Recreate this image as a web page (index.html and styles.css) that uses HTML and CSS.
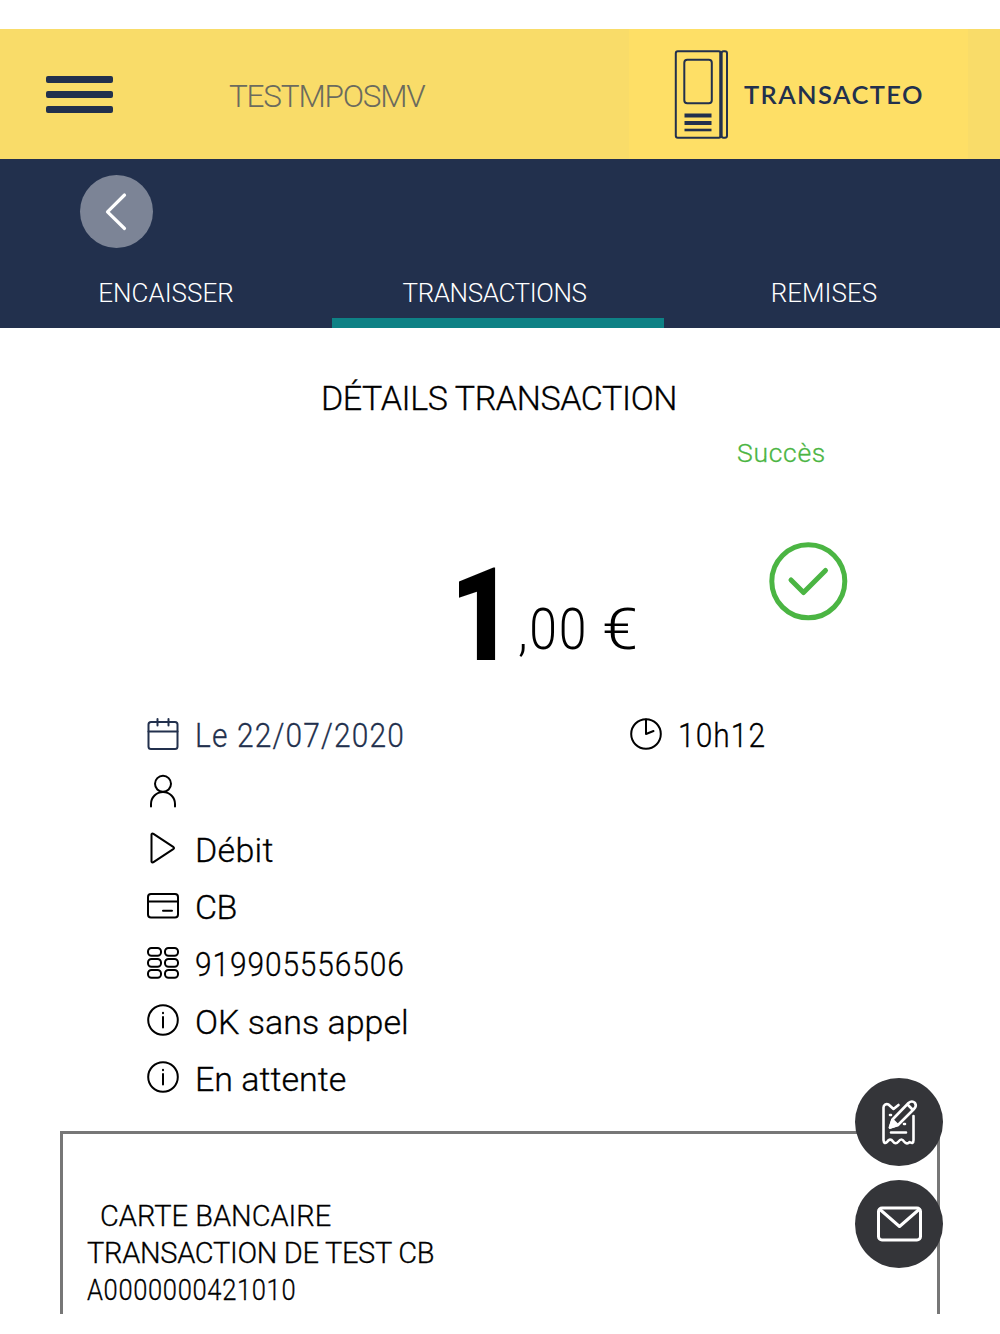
FILE: index.html
```html
<!DOCTYPE html>
<html lang="fr">
<head>
<meta charset="UTF-8">
<meta name="viewport" content="width=device-width, initial-scale=1.0">
<title>Transacteo - Détails transaction</title>
<link rel="stylesheet" href="styles.css">
</head>
<body>
  <header class="header">
    <button class="menu-toggle" aria-label="Menu">
      <span class="bar"></span>
      <span class="bar"></span>
      <span class="bar"></span>
    </button>
    <div class="merchant">TESTMPOSMV</div>
    <div class="logo">
      <svg class="logo-icon" width="54" height="90" viewBox="0 0 54 90" fill="none" stroke="#22304d" stroke-width="2">
        <rect x="1.8" y="2.3" width="45" height="86.5" rx="2"/>
        <rect x="47.5" y="2.3" width="5.5" height="86.5" rx="2"/>
        <path d="M46.8 3v85" stroke-width="3"/>
        <rect x="10.300" y="10.8" width="27.500" height="43.5" rx="3"/>
        <path d="M10.500 66.500h27M10.500 74h27" stroke-width="4"/>
        <path d="M10.500 81h27" stroke-width="2.6"/>
      </svg>
      <span class="logo-text">TRANSACTEO</span>
    </div>
  </header>

  <nav class="navbar">
    <a href="#" class="back" aria-label="Retour">
      <svg width="73" height="73" viewBox="0 0 73 73" fill="none" stroke="#fff" stroke-width="3.2" stroke-linecap="round" stroke-linejoin="round">
        <path d="M44.5 20L27.5 36.8L44.5 53.5"/>
      </svg>
    </a>
    <div class="tabs">
      <a href="#" class="tab">ENCAISSER</a>
      <a href="#" class="tab tab-transactions active">TRANSACTIONS</a>
      <a href="#" class="tab tab-remises">REMISES</a>
    </div>
  </nav>

  <main class="content">
    <h1 class="title">DÉTAILS TRANSACTION</h1>
    <p class="status">Succès</p>

    <div class="amount-row">
      <div class="amount">
        <span class="units">1</span>
        <span class="cents">,00</span>
        <span class="currency">€</span>
      </div>
      <svg class="check" width="80" height="80" viewBox="0 0 80 80" fill="none" stroke="#4bb543" stroke-linecap="round" stroke-linejoin="round">
        <circle cx="40.3" cy="40.3" r="36.5" stroke-width="5"/>
        <path d="M23 39L35.5 51.5L57.5 29.5" stroke-width="5"/>
      </svg>
    </div>

    <ul class="details">
      <li class="detail date">
        <svg class="icon" viewBox="0 0 34 34">
          <rect x="2.5" y="5" width="29" height="27" rx="2.5"/>
          <path d="M2.5 14.5h29M11.5 2v6.5M22.5 2v6.5"/>
        </svg>
        <span class="label label-date">Le 22/07/2020</span>
        <span class="time">
          <svg class="icon" viewBox="0 0 34 34">
            <circle cx="17" cy="17" r="14.8"/>
            <path d="M17 2.5V17L24.5 14"/>
          </svg>
          <span class="label label-hour">10h12</span>
        </span>
      </li>
      <li class="detail">
        <svg class="icon" viewBox="0 0 34 34">
          <circle cx="17" cy="9.8" r="8"/>
          <path d="M5 32.5V30a12 12 0 0 1 24 0v2.5"/>
        </svg>
      </li>
      <li class="detail">
        <svg class="icon" viewBox="0 0 34 34">
          <path d="M5.5 3.5v27a1 1 0 0 0 1.6.8L27.6 17.8a1 1 0 0 0 0-1.6L7.1 2.7A1 1 0 0 0 5.5 3.5z"/>
        </svg>
        <span class="label label-type">Débit</span>
      </li>
      <li class="detail">
        <svg class="icon" viewBox="0 0 34 34">
          <rect x="2" y="5" width="30" height="23.5" rx="3"/>
          <path d="M2 12.5h30M17 21.8h9"/>
        </svg>
        <span class="label label-card">CB</span>
      </li>
      <li class="detail">
        <svg class="icon" viewBox="0 0 34 34">
          <rect x="2" y="2" width="13" height="7.8" rx="3.5"/>
          <rect x="19" y="2" width="13" height="7.8" rx="3.5"/>
          <rect x="2" y="13" width="13" height="7.8" rx="3.5"/>
          <rect x="19" y="13" width="13" height="7.8" rx="3.5"/>
          <rect x="2" y="24" width="13" height="7.8" rx="3.5"/>
          <rect x="19" y="24" width="13" height="7.8" rx="3.5"/>
        </svg>
        <span class="label label-number">919905556506</span>
      </li>
      <li class="detail">
        <svg class="icon" viewBox="0 0 34 34">
          <circle cx="17" cy="17" r="14.8"/>
          <path d="M17 14v10.5M17 9.8v.5"/>
        </svg>
        <span class="label">OK sans appel</span>
      </li>
      <li class="detail">
        <svg class="icon" viewBox="0 0 34 34">
          <circle cx="17" cy="17" r="14.8"/>
          <path d="M17 14v10.5M17 9.8v.5"/>
        </svg>
        <span class="label">En attente</span>
      </li>
    </ul>

    <section class="receipt">
      <p class="line line-indent">CARTE BANCAIRE</p>
      <p class="line line-test">TRANSACTION DE TEST CB</p>
      <p class="line line-aid">A0000000421010</p>
    </section>
  </main>

  <div class="actions">
    <button class="action" aria-label="Signer">
      <svg width="88" height="88" viewBox="0 0 88 88" fill="none" stroke="#fff" stroke-width="2.6" stroke-linecap="round" stroke-linejoin="round">
        <path d="M43.5 27L38.5 31L33.5 26.5C31 25.5 28.5 27 28.5 29.5V62Q29 66.5 32 64Q35 59.5 38 63.5Q40.5 67 43.5 63.5Q46.5 59.5 49 63.5Q52 67 54.5 64Q58.5 66.5 58.5 62V38"/>
        <path d="M36 54.5h15M35 37h1M49 46h1"/>
        <path d="M35 49.5L37.5 41.5L53.5 25Q57 22 60 25Q62 28 59 31L43 47z"/>
        <path d="M35 49.5L37.5 42L42.5 47z" fill="#fff"/>
        <path d="M53 27L57.5 31.5"/>
      </svg>
    </button>
    <button class="action" aria-label="Envoyer par e-mail">
      <svg width="88" height="88" viewBox="0 0 88 88" fill="none" stroke="#fff" stroke-width="3" stroke-linecap="round" stroke-linejoin="round">
        <rect x="23.5" y="28" width="42" height="32" rx="3.5"/>
        <path d="M25 29.5L44.5 46.5L64 29.5"/>
      </svg>
    </button>
  </div>
</body>
</html>
```
FILE: styles.css
```css
* {
  margin: 0;
  padding: 0;
  box-sizing: border-box;
}

body {
  font-family: Roboto, "Open Sans", sans-serif;
  font-weight: 300;
  color: #000;
  background-color: #fff;
  padding-top: 29px;
  height: 1334px;
  overflow: hidden;
}

a {
  color: inherit;
  text-decoration: none;
}

button {
  border: none;
  background: none;
  cursor: pointer;
}

/* Header */
.header {
  display: flex;
  align-items: center;
  height: 130px;
  padding-left: 46px;
  background-color: #f9dc69;
}

.menu-toggle {
  display: flex;
  flex-direction: column;
  gap: 8px;
  width: 67px;
}

.bar {
  height: 7px;
  border-radius: 2px;
  background-color: #22304d;
}

.merchant {
  width: 400px;
  margin-left: 116px;
  padding-top: 5px;
  font-size: 31.5px;
  letter-spacing: -1.2px;
  color: #6b6b5e;
}

.logo {
  display: flex;
  align-items: center;
  width: 339px;
  height: 100%;
  padding-left: 45px;
  background-color: #fedf66;
}

.logo-text {
  margin-left: 16px;
  font-family: Lato, sans-serif;
  font-size: 25.5px;
  font-weight: 600;
  letter-spacing: 1.4px;
  color: #22304d;
}

/* Navigation */
.navbar {
  display: flex;
  flex-direction: column;
  justify-content: space-between;
  height: 169px;
  padding-top: 16px;
  color: #fff;
  background-color: #22304d;
}

.back {
  width: 73px;
  height: 73px;
  margin-left: 80px;
  border-radius: 50%;
  background-color: #7c8496;
}

.tabs {
  display: flex;
}

.tab {
  width: 332px;
  height: 53px;
  padding-top: 3px;
  font-size: 26px;
  line-height: 31px;
  text-align: center;
  border-bottom: 10px solid transparent;
}

.tab-transactions {
  padding-right: 7px;
  letter-spacing: -0.4px;
}

.tab-remises {
  padding-right: 12px;
}

.tab.active {
  border-color: #0e8185;
}

/* Transaction */
.title {
  margin-top: 50px;
  padding-right: 2px;
  font-size: 34px;
  font-weight: 300;
  line-height: 40px;
  letter-spacing: -0.4px;
  text-align: center;
  -webkit-text-stroke: 0.3px;
}

.status {
  margin: 19px 0 0 737px;
  font-size: 26.5px;
  line-height: 32px;
  letter-spacing: 0.7px;
  color: #4bb543;
  -webkit-text-stroke: 0.3px;
}

.amount-row {
  display: flex;
  height: 236px;
  padding-left: 450px;
}

.amount {
  display: flex;
  align-items: baseline;
  width: 318px;
  padding-top: 72px;
}

.units {
  width: 68px;
  font-size: 130px;
  font-weight: 900;
  line-height: 150px;
  transform: scaleX(0.85);
  transform-origin: left;
}

.cents,
.currency {
  position: relative;
  top: -11px;
  font-size: 58px;
  transform-origin: left;
}

.cents {
  letter-spacing: 2px;
  transform: scaleX(0.86);
}

.currency {
  margin-left: 3px;
  transform: scaleX(1.12);
}

.check {
  margin-top: 72px;
}

.details {
  list-style: none;
  padding-left: 146px;
}

.detail {
  display: flex;
  align-items: center;
  height: 57.3px;
}

.date {
  color: #22304d;
}

.icon {
  width: 34px;
  height: 34px;
  fill: none;
  stroke: currentColor;
  stroke-width: 2;
  stroke-linecap: round;
  stroke-linejoin: round;
}

.label {
  margin-left: 15px;
  padding-top: 3px;
  font-size: 34px;
  line-height: 40px;
  -webkit-text-stroke: 0.3px;
}

/* Condensed digits */
.label-date,
.label-hour,
.label-number,
.line-aid {
  transform: scaleX(0.88);
  transform-origin: left;
}

.label-date {
  width: 434px;
  letter-spacing: 1.3px;
}

.label-hour {
  letter-spacing: 1.2px;
}

.label-type {
  letter-spacing: 0.3px;
}

.label-card {
  letter-spacing: -0.5px;
}

.label-number {
  letter-spacing: 1px;
}

.time {
  display: flex;
  align-items: center;
  color: #000;
}

/* Receipt */
.receipt {
  height: 183px;
  margin: 25px 60px 0;
  padding: 64px 0 0 24px;
  border: 3px solid #777;
  border-bottom: none;
}

.line {
  font-size: 29px;
  line-height: 37px;
  -webkit-text-stroke: 0.3px;
}

.line-indent {
  padding-left: 13px;
}

.line-test {
  letter-spacing: -0.3px;
}

.line-aid {
  letter-spacing: 0.75px;
}

/* Floating buttons over the receipt */
.actions {
  position: absolute;
  top: 1078px;
  right: 57px;
  display: flex;
  flex-direction: column;
  gap: 14px;
}

.action {
  width: 88px;
  height: 88px;
  border-radius: 50%;
  background-color: #343539;
}
```
